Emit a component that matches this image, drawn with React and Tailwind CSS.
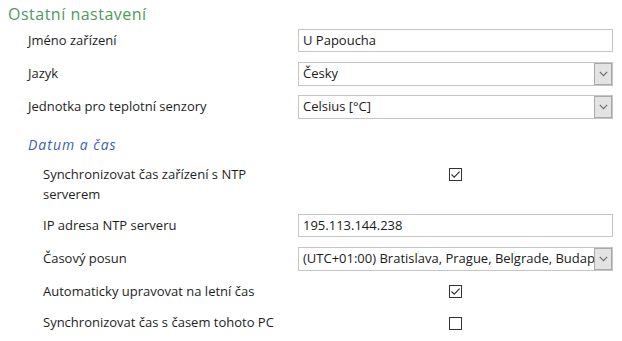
import React from "react";

function Chevron() {
  return (
    <svg width="9" height="6" viewBox="0 0 9 6" className="block">
      <path d="M0.8 0.8 L4.5 4.6 L8.2 0.8" fill="none" stroke="#6b6b6b" strokeWidth="1.1" />
    </svg>
  );
}

function TextBox({ value }) {
  return (
    <div className="w-[315px] h-[23px] border border-[#c5c5c5] bg-white flex items-center pl-[4px] text-[#1a1a1a] overflow-hidden whitespace-nowrap">
      {value}
    </div>
  );
}

function SelectBox({ value }) {
  return (
    <div className="w-[315px] h-[24px] border border-[#c5c5c5] bg-white flex items-stretch text-[#1a1a1a]">
      <div className="flex-1 flex items-center pl-[4px] overflow-hidden whitespace-nowrap">{value}</div>
      <div className="w-[18px] bg-[#e3e3e3] border border-[#a9a9a9] flex items-center justify-center">
        <Chevron />
      </div>
    </div>
  );
}

function Check({ checked }) {
  return (
    <div className="w-[315px] flex justify-center">
      <div className="w-[13px] h-[13px] border border-[#333] bg-white flex items-center justify-center">
        {checked && (
          <svg width="11" height="11" viewBox="0 0 11 11" className="block">
            <path d="M1.5 5.5 L4.2 8.2 L9.6 2.6" fill="none" stroke="#333" strokeWidth="1.2" />
          </svg>
        )}
      </div>
    </div>
  );
}

export default function App() {
  return (
    <div
      className="w-[622px] h-[341px] bg-white text-[13px] text-[#1e1e1e] overflow-hidden"
      style={{ fontFamily: '"Open Sans", "Noto Sans", sans-serif' }}
    >
      <div className="h-[24px] pl-[8px] pt-[4px] text-[16px] leading-[20px] text-[#4e9a5c] tracking-[0.5px]">
        Ostatní nastavení
      </div>
      <div className="flex items-center h-[33px]">
        <div className="w-[298px] pl-[28px]">Jméno zařízení</div>
        <TextBox value="U Papoucha" />
      </div>
      <div className="flex items-center h-[33px]">
        <div className="w-[298px] pl-[28px]">Jazyk</div>
        <SelectBox value="Česky" />
      </div>
      <div className="flex items-center h-[33px]">
        <div className="w-[298px] pl-[28px]">Jednotka pro teplotní senzory</div>
        <SelectBox value="Celsius [°C]" />
      </div>
      <div className="h-[41px] pl-[28px] pt-[12px] italic text-[14px] leading-[20px] text-[#3b5fb4] tracking-[1px]">
        Datum a čas
      </div>
      <div className="flex items-start h-[45px]">
        <div className="w-[298px] pl-[43px] pr-[50px] leading-[20px]">
          Synchronizovat čas zařízení s NTP serverem
        </div>
        <div className="pt-[4px]">
          <Check checked />
        </div>
      </div>
      <div className="flex items-center h-[33px]">
        <div className="w-[298px] pl-[43px]">IP adresa NTP serveru</div>
        <TextBox value="195.113.144.238" />
      </div>
      <div className="flex items-center h-[33px]">
        <div className="w-[298px] pl-[43px]">Časový posun</div>
        <SelectBox value="(UTC+01:00) Bratislava, Prague, Belgrade, Budapest, Ljubljana" />
      </div>
      <div className="flex items-center h-[33px]">
        <div className="w-[298px] pl-[43px]">Automaticky upravovat na letní čas</div>
        <Check checked />
      </div>
      <div className="flex items-center h-[30px]">
        <div className="w-[298px] pl-[43px]">Synchronizovat čas s časem tohoto PC</div>
        <Check />
      </div>
    </div>
  );
}
